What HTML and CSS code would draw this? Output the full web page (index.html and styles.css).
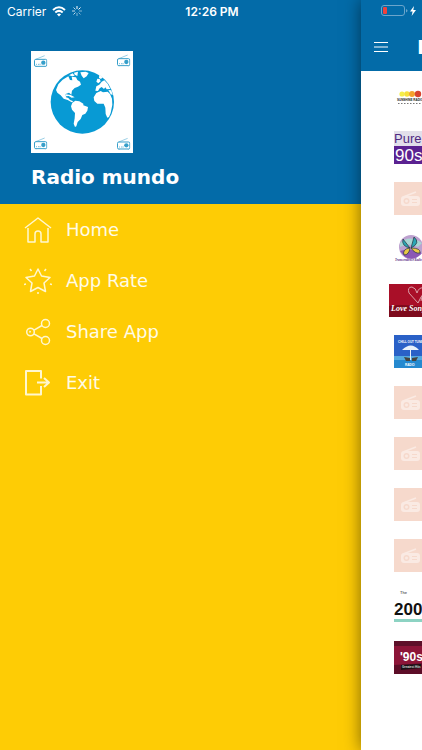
FILE: index.html
```
<!DOCTYPE html>
<html lang="en">
<head>
    <meta charset="UTF-8">
    <meta name="viewport" content="width=device-width, initial-scale=1.0">
    <title>Radio mundo</title>
    <link rel="stylesheet" href="styles.css">
</head>
<body>
<svg class="symbols" aria-hidden="true">
    <symbol id="radio" viewBox="0 0 40 36">
        <path d="M5 13 L32 2" fill="none" stroke="currentColor" stroke-width="1.5"/>
        <rect x="1.5" y="13" width="37" height="21" rx="4" fill="none" stroke="currentColor" stroke-width="3"/>
        <circle cx="28" cy="23" r="6.5" fill="currentColor"/>
        <path d="M6 28h3M12 28h3M18 26v4M6 34v2M34 34v2" stroke="currentColor" stroke-width="2"/>
    </symbol>
    <symbol id="placeholder" viewBox="0 0 33 33">
        <rect width="33" height="33" fill="#f6d9cc"/>
        <path d="M9 15 L22 10" stroke="#faeae3" stroke-width="1.5"/>
        <rect x="7" y="14" width="19" height="10" rx="3" fill="#faeae3"/>
        <circle cx="12.5" cy="19" r="3" fill="#f6d9cc"/>
        <circle cx="12.5" cy="19" r="1.5" fill="#faeae3"/>
        <path d="M18 17.5h5M18 20.5h5" stroke="#f6d9cc" stroke-width="1.2"/>
    </symbol>
</svg>

<div class="status-bar">
    <div class="status-left">
        <span>Carrier</span>
        <svg width="14" height="11" viewBox="0 0 14 11" fill="none" stroke="#fff" stroke-width="2">
            <path d="M1 4 Q7 -1.5 13 4M3.3 6.5 Q7 3.2 10.7 6.5"/>
            <path d="M7 10.5 L4.9 8.3 Q7 6.7 9.1 8.3Z" fill="#fff" stroke="none"/>
        </svg>
        <svg width="10" height="10" viewBox="0 0 10 10" stroke="#fff" stroke-width="1">
            <path d="M5 0v3M8.5 1.5l-2 2"/>
            <path d="M10 5h-3M8.5 8.5l-2-2M5 10v-3" opacity=".5"/>
            <path d="M1.5 8.5l2-2M0 5h3M1.5 1.5l2 2" opacity=".75"/>
        </svg>
    </div>
    <span class="clock">12:26 PM</span>
    <div class="status-right">
        <svg width="36" height="12" viewBox="0 0 36 12">
            <rect x=".5" y=".5" width="23" height="10" rx="2.5" fill="none" stroke="#6ba5cb"/>
            <rect x="2" y="2" width="4" height="7" rx="1" fill="#f0413c"/>
            <path d="M25 4v3.500q1.500-.5 1.500-1.750t-1.500-1.750" fill="#6ba5cb"/>
            <path d="M33 1l-4 5.500h2.600l-1 4.500 4.400-6h-2.700z" fill="#fff"/>
        </svg>
    </div>
</div>

<div class="app">
    <nav class="drawer">
        <header class="drawer-header">
            <svg class="logo" viewBox="33 33 306 306">
                <rect x="33" y="33" width="306" height="306" fill="#fff"/>
                <g color="#369fca">
                    <use href="#radio" x="42" y="44" width="40" height="38"/>
                    <use href="#radio" x="291" y="42" width="40" height="38"/>
                    <use href="#radio" x="42" y="291" width="40" height="38"/>
                    <use href="#radio" x="291" y="292" width="40" height="38"/>
                </g>
                <circle cx="187" cy="186" r="95" fill="#089ad4"/>
                <g fill="#fff">
                    <path d="M108 150 L115 133 128 119 145 109 150 120 157 121 155 110 168 112 172 120 180 125 183 134 174 140 164 144 156 152 154 164 147 158 137 162 138 172 145 174 150 180 160 184 155 187 143 180 131 176 122 166 112 158Z"/>
                    <path d="M147 106l11-6 6 7-7 2zM162 98l12-3-2 13-8-4zM181 97l16-2 9 4-6 10-9 6-6-8z"/>
                    <path d="M138 163l14 2 12 7-9 1-9-5-8 1z"/>
                    <path d="M157 188l9-6 12 2 12 7 0 5 14 5-2 11-6 9-9 4-5 12-9 9-4 13-4 2-4-10 3-16 1-16-9-10-3-10z"/>
                    <path d="M229 125l3-9 7 1 3 7-7 6zM238 104l10 8-5 5-6-3zM229 139l9-5 7-9 8-4 10 10 8 16-11 1-4-6-4 5-7-6-6 4-5 8-8-1z"/>
                    <path d="M229 159l13-6 7 4 14-2 7 7 6 14 1 18-5 25-5 12-5 2-5-11-1-19-5-12-19 0-9-8-2-11z"/>
                    <path d="M265 150l9 1 4 14-6-2z"/>
                </g>
            </svg>
            <h1>Radio mundo</h1>
        </header>
        <ul class="menu">
            <li><a href="#home">
                <svg class="icon" viewBox="0 0 28 28"><path d="M1 12 L14 2 27 12M4 12v14h7v-8q0-3 3-3t3 3v8h7v-14"/></svg>
                <span>Home</span>
            </a></li>
            <li><a href="#rate">
                <svg class="icon" viewBox="0 0 28 28"><path d="M14 2 L17.500 9 26 10.500 20 16 21.500 24.500 14 20.500 6.500 24.500 8 16 2 10.500 10.500 9ZM6 2l1.500 2M22 2l-1.500 2M0 17.500l2-.5M28 17.500l-2-.5M14 25v2"/></svg>
                <span>App Rate</span>
            </a></li>
            <li><a href="#share">
                <svg class="icon" viewBox="0 0 28 28"><circle cx="6.5" cy="14" r="3.8"/><circle cx="21.5" cy="5.5" r="4"/><circle cx="21.5" cy="22.5" r="4"/><path d="M10 12.200 L18 7.500M10 15.800 L18 20.500M5.500 14.500l1-1.500"/></svg>
                <span>Share App</span>
            </a></li>
            <li><a href="#exit">
                <svg class="icon icon-exit" viewBox="0 0 28 28"><path d="M17 9.500v-7.500h-15v23.500h15v-8.500M13 13.500h12M20 9l5 4.500-5 4.500"/></svg>
                <span>Exit</span>
            </a></li>
        </ul>
    </nav>

    <main class="page">
        <header class="page-header">
            <button class="menu-button" type="button" aria-label="Menu">
                <svg width="14" height="12" viewBox="0 0 14 12" stroke="#fff"><path d="M0 1.500h14M0 6h14M0 10.500h14"/></svg>
            </button>
            <h2>Radio mundo</h2>
        </header>
        <ul class="stations">
            <li>
                <svg class="thumb" viewBox="0 0 33 33">
                    <circle cx="8" cy="14" r="2.6" fill="#f5ee4a"/><circle cx="13" cy="14" r="2.8" fill="#f7e03c"/><circle cx="18" cy="14" r="3" fill="#f5a32c"/><circle cx="24" cy="14" r="3.2" fill="#d8442e"/>
                    <text class="t-sunshine" x="3" y="21">SUNSHINE RADIO</text>
                    <path d="M4 23.500h25" stroke="#777" stroke-dasharray="1.5 1.5"/>
                </svg>
            </li>
            <li>
                <svg class="thumb" viewBox="0 0 33 33">
                    <rect width="33" height="33" fill="#e2dfea"/><rect y="15" width="33" height="18" fill="#5b2291"/>
                    <text class="t-pure" x="0" y="12">Pure.</text>
                    <text class="t-90" x="1" y="30">90s</text>
                </svg>
            </li>
            <li><svg class="thumb"><use href="#placeholder"/></svg></li>
            <li>
                <svg class="thumb" viewBox="0 0 33 33">
                    <circle cx="17" cy="14" r="12" fill="#bda1cf"/>
                    <path d="M6 10q9-9 22 0l-4 4q-9-5-18 0z" fill="#a9d6d3"/><path d="M6 18q10-4 22 2-8 9-17 4z" fill="#8b58b5"/>
                    <path d="M16 15 L9 6q-2 7 7 9zM17 15l3-11q7 6-3 11z" fill="#2aa6b4" stroke="#27333d" stroke-width=".7"/>
                    <path d="M16 15q-8 1-6 7 5 0 6-7zM17 15q10 0 9 5-5 1-9-5z" fill="#e8ca45" stroke="#27333d" stroke-width=".7"/>
                    <text class="t-script" x="1" y="28">Transcendence Radio</text>
                </svg>
            </li>
            <li>
                <svg class="thumb thumb-wide" viewBox="0 0 44 33">
                    <rect width="44" height="33" fill="#a90f28"/><path d="M0 22q20-3 44 3v8H0z" fill="#7d0a1c"/>
                    <path d="M29 19 L20 9q-2-6 3-6 4 1 5 6 2-6 6-5 4 3-2 9zM32 17q2-13 9-14" fill="none" stroke="#dba0a8"/>
                    <text class="t-love" x="2" y="27">Love Songs</text>
                </svg>
            </li>
            <li>
                <svg class="thumb" viewBox="0 0 33 33">
                    <rect width="33" height="33" fill="#2a61c7"/><rect y="21" width="33" height="4" fill="#54a9e0"/><rect y="25" width="33" height="8" fill="#2589cf"/>
                    <path d="M8 15q9-9 17 0zM16 14h1v11h-1z" fill="#e9f2fa"/>
                    <path d="M10 22l2 4h4v-3zM24 22l-2 4h-4v-3z" fill="#46443f"/>
                    <text class="t-chill" x="4" y="8">CHILL OUT TUNES</text>
                    <text class="t-chill" x="11" y="31">RADIO</text>
                </svg>
            </li>
            <li><svg class="thumb"><use href="#placeholder"/></svg></li>
            <li><svg class="thumb"><use href="#placeholder"/></svg></li>
            <li><svg class="thumb"><use href="#placeholder"/></svg></li>
            <li><svg class="thumb"><use href="#placeholder"/></svg></li>
            <li>
                <svg class="thumb" viewBox="0 0 33 33">
                    <rect y="29" width="33" height="3" fill="#8dd3c3"/>
                    <text class="t-the" x="6" y="4">The</text>
                    <text class="t-2000" x="0" y="25">2000</text>
                </svg>
            </li>
            <li>
                <svg class="thumb" viewBox="0 0 33 33">
                    <rect width="33" height="33" fill="#8c1538"/><rect width="33" height="5" fill="#5d1029"/><path d="M0 24l33-2v11H0z" fill="#5c0d27"/>
                    <text class="t-90s" x="6" y="20">'90s</text>
                    <path d="M7 24l20-1v4l-20 2z" fill="#181015"/>
                    <text class="t-hits" x="8" y="27">Greatest Hits</text>
                </svg>
            </li>
        </ul>
    </main>
</div>
</body>
</html>
```
FILE: styles.css
```
* {
    box-sizing: border-box;
}

body {
    margin: 0;
    font-family: Verdana, "DejaVu Sans", sans-serif;
    color: #fff;
    background-color: #fff;
}

ul {
    list-style-type: none;
    margin: 0;
    padding: 0;
}

h1, h2 {
    margin: 0;
    font-size: 20px;
    line-height: 24px;
    font-weight: bold;
    white-space: nowrap;
}

.symbols {
    position: absolute;
    width: 0;
    height: 0;
}

/* Status bar lies over both the drawer and the page */
.status-bar {
    position: absolute;
    top: 0;
    left: 0;
    right: 0;
    z-index: 3;
    display: grid;
    grid-template-columns: 1fr auto 1fr;
    align-items: center;
    height: 22px;
    padding: 0 5px 0 7px;
    font-family: Inter, sans-serif;
    font-size: 12px;
}

.status-left {
    display: flex;
    align-items: center;
    gap: 6px;
}

.status-right {
    display: flex;
    justify-content: flex-end;
}

.clock {
    font-weight: 600;
}

.app {
    display: flex;
    min-height: 100vh;
    overflow: hidden;
}

.drawer {
    flex: 1;
    background-color: #fecc05;
}

.drawer-header {
    height: 204px;
    padding: 51px 31px 0;
    background-color: #036ba8;
}

.logo {
    display: block;
    width: 102px;
    height: 102px;
    margin-bottom: 12px;
}

.menu a {
    display: flex;
    align-items: center;
    gap: 14px;
    height: 51px;
    padding-left: 24px;
    color: #fffbe6;
    font-size: 18px;
    text-decoration: none;
}

.icon {
    width: 28px;
    height: 28px;
    fill: none;
    stroke: #fff7d0;
    stroke-width: 1.5;
    stroke-linejoin: round;
}

.icon-exit {
    stroke-width: 2;
}

/* The page is pushed aside while the drawer is open */
.page {
    position: relative;
    z-index: 2;
    flex: 0 0 61px;
    min-width: 0;
    background-color: #fff;
    box-shadow: 0 0 16px rgba(0, 0, 0, 0.5);
}

.page-header {
    display: flex;
    align-items: center;
    gap: 29px;
    height: 71px;
    padding: 22px 0 0 13px;
    overflow: hidden;
    background-color: #036ba8;
}

.menu-button {
    flex: none;
    display: flex;
    padding: 0;
    border: none;
    background: none;
    cursor: pointer;
}

.stations {
    overflow: hidden;
}

.stations li {
    display: flex;
    align-items: center;
    height: 51px;
    padding-left: 33px;
}

.thumb {
    flex: none;
    width: 33px;
    height: 33px;
    overflow: hidden;
}

.thumb-wide {
    width: 44px;
    margin-left: -5px;
}

.t-sunshine {
    font: bold 3px "Liberation Sans", sans-serif;
    fill: #222;
}

.t-pure {
    font: 13px "Liberation Sans", sans-serif;
    fill: #4f2b83;
}

.t-90 {
    font: 17px "Liberation Sans", sans-serif;
    fill: #fff;
}

.t-script {
    font: italic bold 3px "Liberation Serif", serif;
    fill: #5b2a86;
}

.t-love {
    font: italic bold 8px "Liberation Serif", serif;
    fill: #fff;
}

.t-chill {
    font: bold 3px "Liberation Sans", sans-serif;
    fill: #fff;
}

.t-the {
    font: 4px "Liberation Sans", sans-serif;
    fill: #222;
}

.t-2000 {
    font: bold 17px "Liberation Sans", sans-serif;
    fill: #111;
}

.t-90s {
    font: bold 12px "Liberation Sans", sans-serif;
    fill: #fff;
}

.t-hits {
    font: bold 3px "Liberation Sans", sans-serif;
    fill: #ddd;
}
```
